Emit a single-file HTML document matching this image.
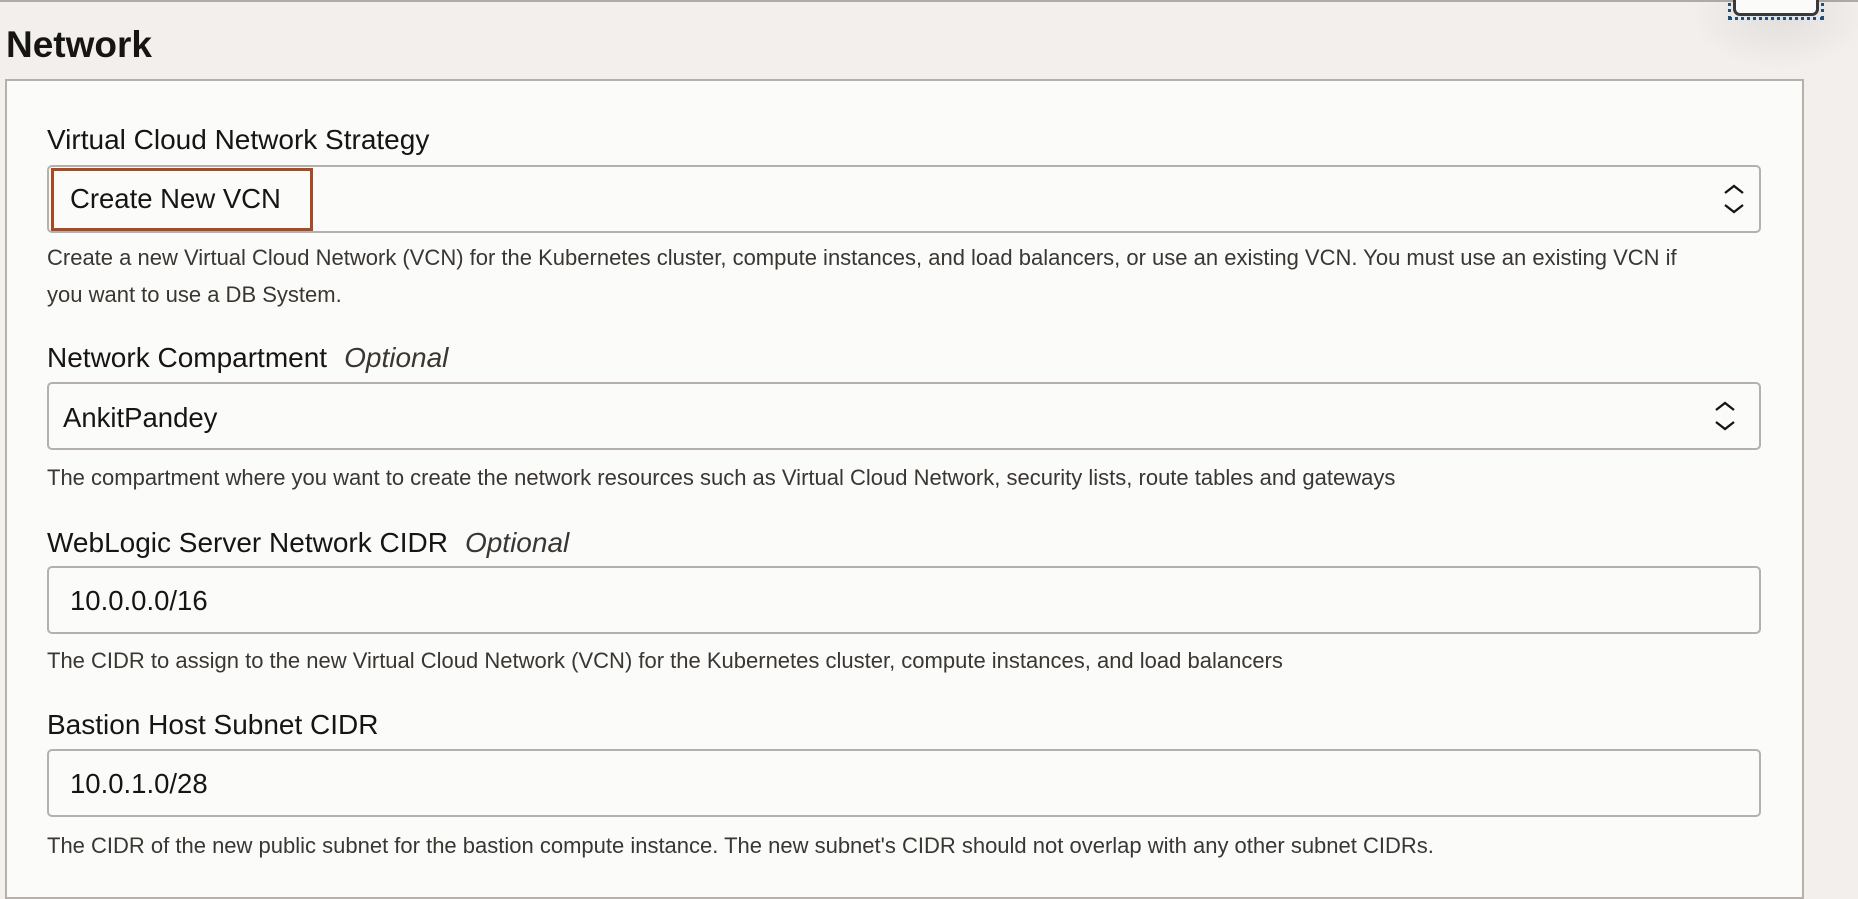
<!DOCTYPE html>
<html><head><meta charset="utf-8"><style>
*{margin:0;padding:0;box-sizing:border-box}
body{width:1858px;height:882px;overflow:hidden;background:#f2efec;font-family:"Liberation Sans",Arial,sans-serif;color:#161513;position:relative}
.topline{position:absolute;left:0;top:0;width:1858px;height:2px;background:#b0aba6}
h1{position:absolute;left:6px;top:24px;font-size:37px;line-height:42px;font-weight:bold;color:#161513}
.panel{position:absolute;left:5px;top:79px;width:1799px;height:820px;background:#fbfbf9;border:2px solid #b5b0ab}
.lbl{position:absolute;left:47px;font-size:28px;line-height:32px;color:#161513;white-space:nowrap}
.lbl i{color:#3a3631;margin-left:17px}
.box{position:absolute;left:47px;width:1714px;height:68px;border:2px solid #b5b0ab;border-radius:5px;background:#fbfbf9}
.val{position:absolute;font-size:27.5px;line-height:32px;color:#161513;white-space:nowrap}
.help{position:absolute;left:47px;font-size:22px;line-height:37px;color:#3a3631;white-space:nowrap}
svg{position:absolute}
</style></head><body>
<div class="topline"></div>
<div style="position:absolute;left:1690px;top:-40px;width:180px;height:110px;border-radius:50%;background:radial-gradient(ellipse at center,rgba(0,0,0,0.07),rgba(0,0,0,0) 70%)"></div>
<div style="position:absolute;left:1728px;top:-4px;width:96px;height:24px;border:3px dotted #1f4e79;border-top:none"></div>
<div style="position:absolute;left:1733px;top:-10px;width:86px;height:26px;border:3px solid #3a3a3a;border-radius:7px;background:#fbfbf9"></div>
<h1>Network</h1>
<div class="panel"></div>

<div class="lbl" style="top:124px">Virtual Cloud Network Strategy</div>
<div class="box" style="top:165px"></div>
<div style="position:absolute;left:51px;top:168px;width:262px;height:63px;border:3px solid #a84b25"></div>
<div class="val" style="left:70px;top:183px">Create New VCN</div>
<svg style="left:1721px;top:182px" width="26" height="34" viewBox="0 0 26 34"><path d="M4 11 L13 4 L22 11 M4 23 L13 30 L22 23" fill="none" stroke="#161513" stroke-width="2.3"/></svg>
<div class="help" style="top:239px">Create a new Virtual Cloud Network (VCN) for the Kubernetes cluster, compute instances, and load balancers, or use an existing VCN. You must use an existing VCN if<br>you want to use a DB System.</div>

<div class="lbl" style="top:342px">Network Compartment<i>Optional</i></div>
<div class="box" style="top:382px"></div>
<div class="val" style="left:63px;top:402px">AnkitPandey</div>
<svg style="left:1712px;top:399px" width="26" height="34" viewBox="0 0 26 34"><path d="M4 11 L13 4 L22 11 M4 23 L13 30 L22 23" fill="none" stroke="#161513" stroke-width="2.3"/></svg>
<div class="help" style="top:459px">The compartment where you want to create the network resources such as Virtual Cloud Network, security lists, route tables and gateways</div>

<div class="lbl" style="top:527px">WebLogic Server Network CIDR<i>Optional</i></div>
<div class="box" style="top:566px"></div>
<div class="val" style="left:70px;top:585px">10.0.0.0/16</div>
<div class="help" style="top:642px">The CIDR to assign to the new Virtual Cloud Network (VCN) for the Kubernetes cluster, compute instances, and load balancers</div>

<div class="lbl" style="top:709px">Bastion Host Subnet CIDR</div>
<div class="box" style="top:749px"></div>
<div class="val" style="left:70px;top:768px">10.0.1.0/28</div>
<div class="help" style="top:827px">The CIDR of the new public subnet for the bastion compute instance. The new subnet's CIDR should not overlap with any other subnet CIDRs.</div>
</body></html>
